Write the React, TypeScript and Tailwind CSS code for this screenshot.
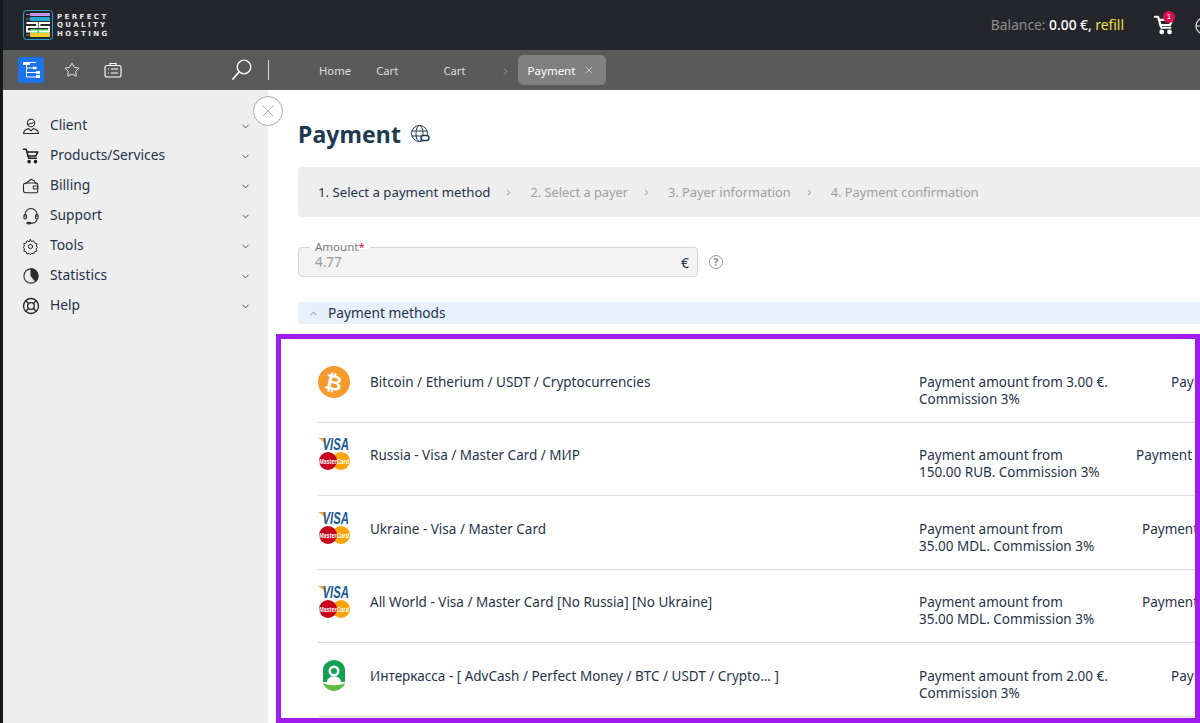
import React from "react";
import { ChevronDown, ChevronUp, ChevronRight, X, Star } from "lucide-react";

const font = "font-['Noto_Sans','Open_Sans',sans-serif]";

function S({ children, size = 24, className = "" }: { children: React.ReactNode; size?: number; className?: string }) {
  return (
    <svg width={size} height={size} viewBox="0 0 24 24" fill="none" stroke="currentColor" strokeWidth="1.4" strokeLinecap="round" strokeLinejoin="round" className={className}>
      {children}
    </svg>
  );
}

const CartIcon = ({ size = 18, sw = 2.4 }: { size?: number; sw?: number }) => (
  <svg width={size} height={size} viewBox="0 0 24 24" fill="none" stroke="currentColor" strokeWidth={sw} strokeLinecap="round" strokeLinejoin="round">
    <path d="M2 3h3.5l3.5 12h10" />
    <path d="M6.5 6.5H21l-2.5 5.5H8" />
    <circle cx="9.5" cy="19.5" r="1.4" fill="currentColor" />
    <circle cx="18" cy="19.5" r="1.4" fill="currentColor" />
  </svg>
);

const menu: [string, React.ReactNode][] = [
  ["Client", <S size={18}><circle cx="12" cy="8" r="5" /><path d="M8 10c2-1 6-1 8-3" /><path d="M2 22c.5-4 4-6 7-6.500l3 3 3-3c3 .5 6.500 2.500 7 6.500z" /></S>],
  ["Products/Services", <span className="text-[#1b1b1b]"><CartIcon size={18} sw={2} /></span>],
  ["Billing", <S size={18}><path d="M5 9l7-6 4 2 3 4" /><path d="M5 8h14a2 2 0 0 1 2 2v9a2 2 0 0 1-2 2H5a3 3 0 0 1-3-3v-7a3 3 0 0 1 3-3z" /><rect x="15" y="12" width="6" height="4" rx="1" /></S>],
  ["Support", <S size={18}><path d="M4 13V10a8 8 0 0 1 16 0v3" /><rect x="2.500" y="10" width="3.500" height="6" rx="1.700" /><rect x="18" y="10" width="3.500" height="6" rx="1.700" /><path d="M20 16c0 3-3 5.500-6 5.500H10" /><ellipse cx="9" cy="21.500" rx="2.500" ry="1" /></S>],
  ["Tools", <S size={17}><circle cx="12" cy="12" r="3" /><path d="M12 2l1.500 3 3-1 1 3 3.500 1-1 3.500 2 1.500-2 2.500 1 3-3.500 1-1 3-3-1-1.500 2-2-2-3 1-1-3-3.500-1 1-3-2-2.500 2-1.500-1-3.500 3.500-1 1-3 3 1z" /></S>],
  ["Statistics", <S size={18}><circle cx="12" cy="12" r="9.500" /><path d="M12 2.500A9.500 9.500 0 0 1 18 19l-6-7z" fill="currentColor" /></S>],
  ["Help", <S size={18}><circle cx="12" cy="12" r="10" strokeWidth="1.800" /><circle cx="12" cy="12" r="4.500" strokeWidth="1.800" /><path d="M5 5l4 4M19 5l-4 4M5 19l4-4M19 19l-4-4" strokeWidth="1.800" /></S>],
];

const Visa = () => (
  <svg width="32" height="34" viewBox="0 0 32 34">
    <path d="M0 1h7l2 9C7 6 4 3 0 1z" fill="#f7a823" />
    <text x="4.500" y="12.500" fontFamily="Liberation Sans" fontStyle="italic" fontWeight="700" fontSize="16" fill="#1a5b97" textLength="26.500" lengthAdjust="spacingAndGlyphs">VISA</text>
    <circle cx="23" cy="24" r="9" fill="#fda400" />
    <circle cx="10" cy="24" r="9" fill="#c8001e" />
    <text x="1" y="26.500" fontFamily="Liberation Sans" fontStyle="italic" fontWeight="700" fontSize="7" fill="#fff" textLength="30" lengthAdjust="spacingAndGlyphs">MasterCard</text>
  </svg>
);

const Bitcoin = () => (
  <div className="w-8 h-8 rounded-full bg-[#f79a2e] flex items-center justify-center text-white">
    <span className="font-['Liberation_Sans',sans-serif] font-bold text-[21px] leading-none rotate-12">₿</span>
  </div>
);

const Inter = () => (
  <svg width="32" height="34" viewBox="0 0 32 34">
    <path d="M5 23V11a11 10 0 0 1 22 0v12z" fill="#12a150" />
    <circle cx="16" cy="12" r="5.500" fill="#fff" />
    <circle cx="16" cy="12" r="3" fill="#12a150" />
    <path d="M9 23c0-3.500 3-5.500 7-5.500s7 2 7 5.500z" fill="#fff" />
    <path d="M5 24c6 3 16 3 22 0c-1 4-6 8-11 8s-10-4-11-8z" fill="#62bb46" />
  </svg>
);

const rows = [
  { icon: <Bitcoin />, name: "Bitcoin / Etherium / USDT / Cryptocurrencies", a: "Payment amount from 3.00 €.", b: "Commission 3%", cut: "Payment", cutx: "pl-[52px]", row: "h-[84px] pt-[35px]", it: "-mt-[8px]" },
  { icon: <Visa />, name: "Russia - Visa / Master Card / МИР", a: "Payment amount from", b: "150.00 RUB. Commission 3%", cut: "Payment", cutx: "pl-[17px]", row: "h-[73px] pt-[24px]", it: "-mt-[10px]" },
  { icon: <Visa />, name: "Ukraine - Visa / Master Card", a: "Payment amount from", b: "35.00 MDL. Commission 3%", cut: "Payment", cutx: "pl-[23px]", row: "h-[74px] pt-[25px]", it: "-mt-[10px]" },
  { icon: <Visa />, name: "All World - Visa / Master Card [No Russia] [No Ukraine]", a: "Payment amount from", b: "35.00 MDL. Commission 3%", cut: "Payment", cutx: "pl-[23px]", row: "h-[73px] pt-[24px]", it: "-mt-[9px]" },
  { icon: <Inter />, name: "Интеркасса - [ AdvCash / Perfect Money / BTC / USDT / Crypto... ]", a: "Payment amount from 2.00 €.", b: "Commission 3%", cut: "Payment", cutx: "pl-[52px]", row: "h-[74px] pt-[25px]", it: "-mt-[9px]" },
];

export default function App() {
  return (
    <div className={`${font} w-[1200px] h-[723px] overflow-hidden bg-white flex text-[#1f3349] text-[13.5px]`}>
      <div className="w-[3px] shrink-0 bg-[#17181b]" />
      <div className="flex-1 min-w-0 flex flex-col">
        {/* top bar */}
        <header className="h-[50px] shrink-0 bg-[#25262b] flex items-center pl-[20px]">
          <div className="flex items-center gap-[4px]">
            <svg width="30" height="30" viewBox="0 0 30 30" fill="none">
              <rect x="0.500" y="0.500" width="29" height="29" rx="3" stroke="#2a9fc4" strokeWidth="1" />
              <path d="M3 4.500h24M3 9h24M3 21h24M3 25h24" stroke="#ddd" strokeWidth="0.500" />
              <rect x="7" y="3" width="20" height="3" rx="0.800" fill="#c792ea" />
              <rect x="7" y="7" width="20" height="4" rx="0.800" fill="#2aa8d8" />
              <rect x="7" y="19" width="20" height="4" rx="0.800" fill="#3fc65a" />
              <rect x="7" y="23" width="20" height="4" rx="0.800" fill="#f3cb2d" />
              <path d="M3.500 13h10.500v4H4v4.500h10.500M27 13H16.500v4H26v4.500H16" stroke="#fff" strokeWidth="1.800" />
            </svg>
            <div className="font-['DejaVu_Sans',sans-serif] font-bold text-[7px] leading-[8.500px] tracking-[2.400px] text-[#e8e8e8] uppercase mt-[1px]">
              <div>Perfect</div>
              <div>Quality</div>
              <div>Hosting</div>
            </div>
          </div>
          <div className="ml-auto flex items-center text-[13.800px] mt-[1px]">
            <span className="text-[#8d8d8d]">Balance:&nbsp;</span>
            <span className="text-white font-medium">0.00 €,&nbsp;</span>
            <span className="text-[#f4e04d]">refill</span>
            <div className="relative ml-[29px] text-white w-[22px] -mt-[2px]">
              <CartIcon size={22} />
              <span className="absolute -top-[3px] left-[10px] w-[12px] h-[12px] rounded-full bg-[#d9104f] text-white text-[8px] leading-[12px] text-center font-['Liberation_Sans',sans-serif]">1</span>
            </div>
            <div className="ml-[20px] w-[5px] overflow-hidden text-[#e5e5e5]">
              <svg width="18" height="18" viewBox="0 0 18 18" fill="none" stroke="currentColor" strokeWidth="1.200" className="shrink-0">
                <circle cx="9" cy="9" r="8" />
                <path d="M1 9h16M9 1c-4 4-4 12 0 16M9 1c4 4 4 12 0 16" />
              </svg>
            </div>
          </div>
        </header>

        {/* second bar */}
        <div className="h-[40px] shrink-0 bg-[#5a5a5a] flex items-center pl-[15px] text-[#e5e5e5]">
          <div className="w-[26px] h-[26px] rounded-[3px] bg-[#1a73e8] flex items-center justify-center text-white">
            <svg width="26" height="26" viewBox="0 0 26 26" fill="none" stroke="currentColor" strokeWidth="1">
              <rect x="5" y="5" width="7" height="3" fill="currentColor" stroke="none" />
              <path d="M12 5.500h6M8.500 8v12h10M8.500 11h7M8.500 15.500h10" />
              <rect x="15" y="9.800" width="3.500" height="2.400" fill="currentColor" stroke="none" />
              <rect x="18" y="14" width="4" height="3" fill="currentColor" stroke="none" />
              <rect x="18" y="18" width="4" height="3" fill="currentColor" stroke="none" />
            </svg>
          </div>
          <Star size={16} strokeWidth={1.300} className="ml-[20px] text-white" />
          <svg width="18" height="18" viewBox="0 0 18 18" fill="none" stroke="#fff" strokeWidth="1.100" className="ml-[24px]">
            <rect x="1" y="4.500" width="16" height="11.500" rx="2" />
            <path d="M6 4.500V2.500h6v2M4 8h1M7 8h7M4 12h1M7 12h7" />
          </svg>
          <svg width="20" height="22" viewBox="0 0 20 22" fill="none" stroke="#fff" strokeWidth="1.300" strokeLinecap="round" className="ml-[110px]">
            <circle cx="12" cy="8" r="6.800" />
            <path d="M7 13L1 20" strokeWidth="1.700" />
          </svg>
          <div className="w-px h-[20px] bg-[#dcdcdc] ml-[16px]" />
          <div className="ml-[50px] flex items-center text-[11.300px] text-[#dedede] mt-[2px]">
            <span>Home</span>
            <span className="ml-[25px]">Cart</span>
            <span className="ml-[45px]">Cart</span>
            <ChevronRight size={11} strokeWidth={1.200} className="ml-[34px] text-[#cfcfcf]" />
            <div className="ml-[7px] h-[30px] w-[88px] -mt-[2px] rounded-[5px] bg-[#808080] text-white flex items-center pl-[10px] gap-[8px]">
              <span className="text-[11.500px] mt-[2px]">Payment</span>
              <X size={12} strokeWidth={1.100} />
            </div>
          </div>
        </div>

        <div className="flex flex-1 min-h-0">
          {/* sidebar */}
          <aside className="relative z-10 w-[265px] shrink-0 bg-[#eeeeee] pt-[21px] pl-[19px] pr-[17px] flex flex-col">
            {menu.map(([label, icon]) => (
              <div key={label} className="h-[30px] flex items-center text-[#1f3349]">
                <span className="w-[28px] text-[#2b2b2b] flex items-center">{icon}</span>
                <span className="text-[13.800px] -mt-[2px]">{label}</span>
                <ChevronDown size={11} strokeWidth={2} className="ml-auto text-[#444]" />
              </div>
            ))}
            <div className="absolute -right-[15px] top-[6px] w-[30px] h-[30px] rounded-full border border-[#aaaaaa] bg-white flex items-center justify-center text-[#9a9a9a]">
              <X size={20} strokeWidth={0.900} />
            </div>
          </aside>

          {/* main */}
          <main className="flex-1 min-w-0 pl-[30px] pt-[28px] overflow-hidden flex flex-col">
            <div className="flex items-center gap-[9px] h-[34px] -mt-[1px] mb-[1px]">
              <h1 className="text-[23px] font-bold text-[#1d3a52] leading-none tracking-[0.100px]">Payment</h1>
              <svg width="20" height="20" viewBox="0 0 20 20" fill="none" stroke="#1d3a52" strokeWidth="1">
                <circle cx="9.500" cy="9.500" r="8" />
                <ellipse cx="9.500" cy="9.500" rx="3.500" ry="8" />
                <path d="M2 7h15M2 12h15" />
                <rect x="11" y="11.500" width="8" height="5" rx="2.500" fill="#fff" strokeWidth="1.400" />
              </svg>
            </div>

            <div className="mt-[15px] h-[50px] w-[920px] shrink-0 bg-[#eeeeee] rounded-l-[3px] flex items-center pl-[20px] pt-[1px] text-[12.800px] text-[#a0a0a0]">
              <span className="text-[#1f3349] text-[13.200px]">1. Select a payment method</span>
              <ChevronRight size={9} strokeWidth={3} className="ml-[14px] mr-[17px] text-[#b5b5b5]" />
              <span>2. Select a payer</span>
              <ChevronRight size={9} strokeWidth={3} className="ml-[14px] mr-[17px] text-[#b5b5b5]" />
              <span>3. Payer information</span>
              <ChevronRight size={9} strokeWidth={3} className="ml-[14px] mr-[17px] text-[#b5b5b5]" />
              <span>4. Payment confirmation</span>
            </div>

            <div className="mt-[30px] flex items-center shrink-0">
              <div className="relative w-[400px] h-[30px] rounded-[4px] border border-[#d8d8d8] bg-[#f3f3f3] flex items-center justify-between pl-[16px] pr-[8px]">
                <span className="absolute -top-[7px] left-[11px] bg-white px-[5px] text-[11.500px] leading-[12px] text-[#777] h-[8px]">
                  Amount<span className="text-[#e0134f]">*</span>
                </span>
                <span className="text-[#9a9a9a] text-[13.500px]">4.77</span>
                <span className="text-[#1f3349] text-[14px]">€</span>
              </div>
              <span className="ml-[11px] w-[14px] h-[14px] rounded-full border border-[#9a9a9a] text-[#8a8a8a] text-[10px] font-bold flex items-center justify-center leading-none">?</span>
            </div>

            <div className="mt-[25px] h-[22px] shrink-0 bg-[#e6f1fd] rounded-l-[3px] flex items-center pl-[10px] text-[13.700px] text-[#1f3349]">
              <ChevronUp size={11} strokeWidth={1.400} className="text-[#555]" />
              <span className="ml-[9px]">Payment methods</span>
            </div>

            {/* highlighted list */}
            <section className="mt-[10px] -ml-[22px] w-[924px] h-[389px] shrink-0 border-[5px] border-[#a01cf0] bg-white pl-[37px] overflow-hidden">
              {rows.map((r, i) => (
                <div key={i} className={`${r.row} border-b border-[#dcdcdc] flex items-start whitespace-nowrap w-[900px]`}>
                  <div className={`w-[52px] shrink-0 ${r.it}`}>{r.icon}</div>
                  <div className="w-[549px] shrink-0 leading-[17px]">{r.name}</div>
                  <div className="w-[200px] shrink-0 leading-[17px]">
                    <div>{r.a}</div>
                    <div>{r.b}</div>
                  </div>
                  <div className={`${r.cutx} leading-[17px]`}>{r.cut}</div>
                </div>
              ))}
            </section>
          </main>
        </div>
      </div>
    </div>
  );
}
